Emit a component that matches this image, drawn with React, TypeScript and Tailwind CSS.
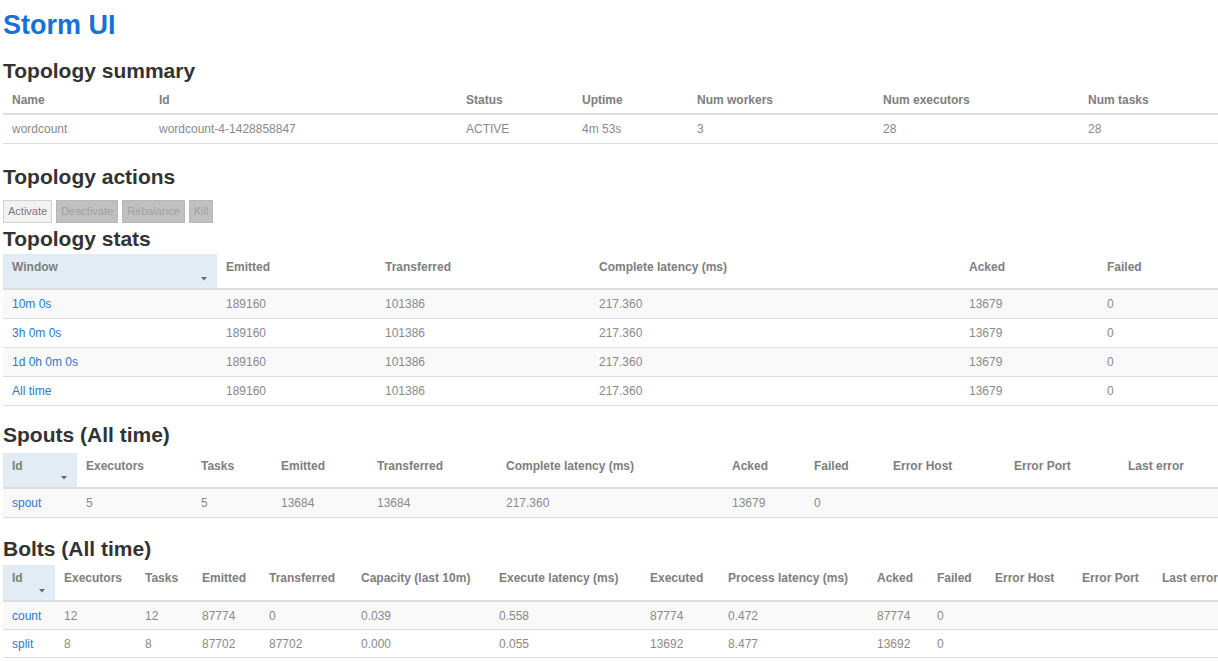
type Cell = string;

interface GridTableProps {
  cols: string;
  headers: string[];
  rows: Cell[][];
  sortable?: boolean;
  striped?: boolean;
  headerH: string;
  rowH: string;
}

function SortArrow() {
  return (
    <svg width="6" height="4" viewBox="0 0 6 4" className="absolute right-[10px] bottom-[7px]">
      <path d="M0 0 L6 0 L3 3.5 Z" fill="#6b6b6b" />
    </svg>
  );
}

function GridTable({ cols, headers, rows, sortable, striped, headerH, rowH }: GridTableProps) {
  return (
    <div className="w-max text-[12px]">
      <div className={`grid ${cols} ${headerH} border-b-2 border-[#dddddd]`}>
        {headers.map((h, i) => (
          <div
            key={h}
            className={
              sortable
                ? `relative pl-[9px] pt-[6px] leading-[14px] font-bold text-[#7e7e7e] whitespace-nowrap ${i === 0 ? "bg-[#e1ecf4]" : ""}`
                : "flex items-center pl-[9px] font-bold text-[#7e7e7e] whitespace-nowrap"
            }
          >
            {h}
            {sortable && i === 0 && <SortArrow />}
          </div>
        ))}
      </div>
      {rows.map((r, ri) => (
        <div
          key={ri}
          className={`grid ${cols} ${rowH} border-b border-[#dddddd] ${striped && ri % 2 === 0 ? "bg-[#f9f9f9]" : "bg-white"}`}
        >
          {headers.map((_, ci) => (
            <div
              key={ci}
              className={`flex items-center pl-[9px] whitespace-nowrap ${ci === 0 && sortable ? "text-[#2c79d0]" : "text-[#8a8a8a]"}`}
            >
              {r[ci] ?? ""}
            </div>
          ))}
        </div>
      ))}
    </div>
  );
}

function Heading({ children, className }: { children: string; className: string }) {
  return (
    <h2 className={`text-[21px] leading-[22px] font-bold text-[#333333] ${className}`}>{children}</h2>
  );
}

export default function App() {
  const stats = ["10m 0s", "3h 0m 0s", "1d 0h 0m 0s", "All time"].map((w) => [
    w,
    "189160",
    "101386",
    "217.360",
    "13679",
    "0",
  ]);

  return (
    <div className="w-[1218px] h-[661px] overflow-hidden bg-white pl-[3px] pt-[10px] font-['Liberation_Sans',Arial,sans-serif]">
      <h1 className="text-[27px] leading-[30px] font-bold text-[#1672d6]">Storm UI</h1>

      <Heading className="mt-[20px]">Topology summary</Heading>
      <div className="mt-[4px]">
        <GridTable
          cols="grid-cols-[147px_307px_116px_115px_186px_205px_139px]"
          headers={["Name", "Id", "Status", "Uptime", "Num workers", "Num executors", "Num tasks"]}
          rows={[["wordcount", "wordcount-4-1428858847", "ACTIVE", "4m 53s", "3", "28", "28"]]}
          headerH="h-[29px]"
          rowH="h-[29px]"
        />
      </div>

      <Heading className="mt-[22px]">Topology actions</Heading>
      <div className="mt-[12px] flex gap-[4px] text-[11px] leading-[21px]">
        <button className="h-[23px] px-[4px] border border-[#d2d2d2] bg-[#f2f2f2] text-[#7a7a7a]">Activate</button>
        <button className="h-[23px] px-[4px] border border-[#b8b8b8] bg-[#c0c0c0] text-[#a0a0a0]">Deactivate</button>
        <button className="h-[23px] px-[4px] border border-[#b8b8b8] bg-[#c0c0c0] text-[#a0a0a0]">Rebalance</button>
        <button className="h-[23px] px-[4px] border border-[#b8b8b8] bg-[#c0c0c0] text-[#a0a0a0]">Kill</button>
      </div>

      <Heading className="mt-[5px]">Topology stats</Heading>
      <div className="mt-[4px]">
        <GridTable
          cols="grid-cols-[214px_159px_214px_370px_138px_120px]"
          headers={["Window", "Emitted", "Transferred", "Complete latency (ms)", "Acked", "Failed"]}
          rows={stats}
          sortable
          striped
          headerH="h-[36px]"
          rowH="h-[29px]"
        />
      </div>

      <Heading className="mt-[18px]">Spouts (All time)</Heading>
      <div className="mt-[7px]">
        <GridTable
          cols="grid-cols-[74px_115px_80px_96px_129px_226px_82px_79px_121px_114px_99px]"
          headers={[
            "Id",
            "Executors",
            "Tasks",
            "Emitted",
            "Transferred",
            "Complete latency (ms)",
            "Acked",
            "Failed",
            "Error Host",
            "Error Port",
            "Last error",
          ]}
          rows={[["spout", "5", "5", "13684", "13684", "217.360", "13679", "0"]]}
          sortable
          striped
          headerH="h-[36px]"
          rowH="h-[29px]"
        />
      </div>

      <Heading className="mt-[20px]">Bolts (All time)</Heading>
      <div className="mt-[5px]">
        <GridTable
          cols="grid-cols-[52px_81px_57px_67px_92px_138px_151px_78px_149px_60px_58px_87px_80px_72px]"
          headers={[
            "Id",
            "Executors",
            "Tasks",
            "Emitted",
            "Transferred",
            "Capacity (last 10m)",
            "Execute latency (ms)",
            "Executed",
            "Process latency (ms)",
            "Acked",
            "Failed",
            "Error Host",
            "Error Port",
            "Last error",
          ]}
          rows={[
            ["count", "12", "12", "87774", "0", "0.039", "0.558", "87774", "0.472", "87774", "0"],
            ["split", "8", "8", "87702", "87702", "0.000", "0.055", "13692", "8.477", "13692", "0"],
          ]}
          sortable
          striped
          headerH="h-[37px]"
          rowH="h-[28px]"
        />
      </div>
    </div>
  );
}
